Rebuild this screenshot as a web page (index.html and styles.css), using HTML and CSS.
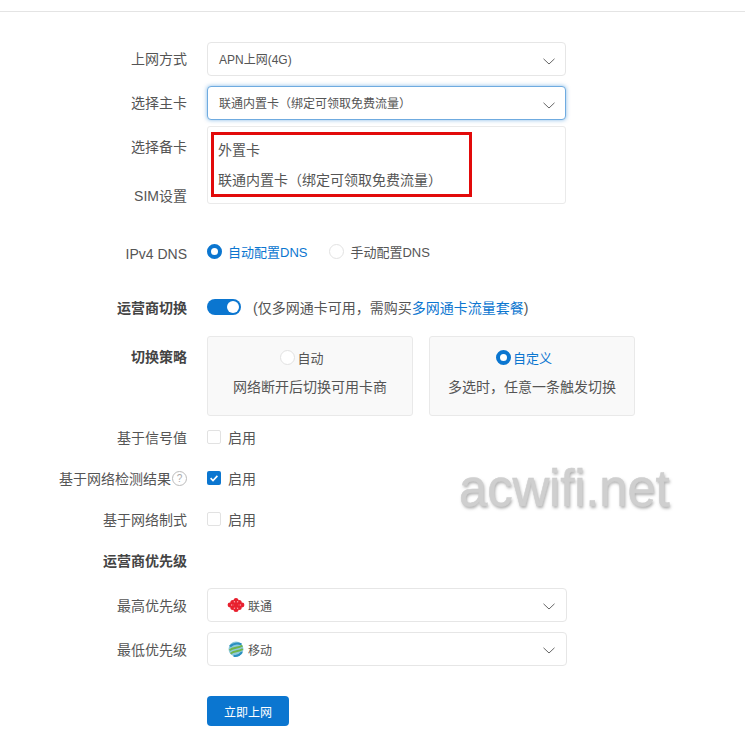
FILE: index.html
```html
<!DOCTYPE html>
<html>
<head>
<meta charset="utf-8">
<title>上网设置</title>
<link rel="stylesheet" href="styles.css">
</head>
<body>
<div class="topline"></div>
<div class="form">

	<div class="row row-select">
		<div class="label top">上网方式</div>
		<div class="select">
			<span>APN上网(4G)</span>
			<svg class="arrow" viewBox="0 0 12 7"><path d="M.5.8 6 6 11.5.8"/></svg>
		</div>
	</div>

	<div class="row row-select">
		<div class="label top">选择主卡</div>
		<div class="select focus">
			<span>联通内置卡（绑定可领取免费流量）</span>
			<svg class="arrow" viewBox="0 0 12 7"><path d="M.5.8 6 6 11.5.8"/></svg>
		</div>
		<div class="dropdown">
			<div class="option">外置卡</div>
			<div class="option">联通内置卡（绑定可领取免费流量）</div>
			<div class="redbox"></div>
		</div>
	</div>

	<div class="row row-backup">
		<div class="label top">选择备卡</div>
	</div>
	<div class="row row-sim">
		<div class="label top">SIM设置</div>
	</div>

	<div class="row row-dns">
		<div class="label low">IPv4 DNS</div>
		<div class="radios">
			<span class="radio on"></span><span class="radio-text blue">自动配置DNS</span>
			<span class="radio second"></span><span class="radio-text">手动配置DNS</span>
		</div>
	</div>

	<div class="row row-switch">
		<div class="label bold">运营商切换</div>
		<span class="switch"><i></i></span>
		<span class="note">(仅多网通卡可用，需购买<a class="link">多网通卡流量套餐</a>)</span>
	</div>

	<div class="row row-cards">
		<div class="label bold">切换策略</div>
		<div class="card">
			<div class="card-head"><span class="radio"></span><span>自动</span></div>
			<div class="card-text">网络断开后切换可用卡商</div>
		</div>
		<div class="card">
			<div class="card-head blue"><span class="radio on"></span><span>自定义</span></div>
			<div class="card-text">多选时，任意一条触发切换</div>
		</div>
	</div>

	<div class="row row-check">
		<div class="label">基于信号值</div>
		<span class="check"></span><span class="check-text">启用</span>
	</div>
	<div class="row row-check">
		<div class="label">基于网络检测结果<span class="help">?</span></div>
		<span class="check on"><svg viewBox="0 0 14 14"><path d="M3.6 7.2 6 9.5l4.4-4.6"/></svg></span><span class="check-text">启用</span>
	</div>
	<div class="row row-check">
		<div class="label">基于网络制式</div>
		<span class="check"></span><span class="check-text">启用</span>
	</div>
	<div class="row row-check last">
		<div class="label bold">运营商优先级</div>
	</div>

	<div class="row row-prio">
		<div class="label">最高优先级</div>
		<div class="select wide">
			<svg class="logo" viewBox="0 0 18 18">
				<g fill="#e8202e">
					<circle cx="9" cy="4.4" r="2.5"/><circle cx="9" cy="13.6" r="2.5"/>
					<circle cx="5.8" cy="6.6" r="2.5"/><circle cx="12.2" cy="6.6" r="2.5"/>
					<circle cx="5.8" cy="11.4" r="2.5"/><circle cx="12.2" cy="11.4" r="2.5"/>
					<circle cx="3" cy="9" r="2.4"/><circle cx="15" cy="9" r="2.4"/>
					<circle cx="9" cy="9" r="2.5"/>
				</g>
				<g fill="#f7a5ab">
					<circle cx="7.4" cy="5.8" r=".7"/><circle cx="10.6" cy="5.8" r=".7"/>
					<circle cx="7.4" cy="12.2" r=".7"/><circle cx="10.6" cy="12.2" r=".7"/>
					<circle cx="4.6" cy="9" r=".7"/><circle cx="13.4" cy="9" r=".7"/>
				</g>
			</svg>
			<span>联通</span>
			<svg class="arrow" viewBox="0 0 12 7"><path d="M.5.8 6 6 11.5.8"/></svg>
		</div>
	</div>
	<div class="row row-prio">
		<div class="label">最低优先级</div>
		<div class="select wide">
			<svg class="logo" viewBox="0 0 18 18">
				<circle cx="9" cy="9" r="7.5" fill="#8ec9dc"/>
				<path d="M3 6.4C6 3.4 11 3 14.4 4.2" fill="none" stroke="#2a8fc0" stroke-width="2.2"/>
				<path d="M2.6 10.4C6 6.6 10.6 8.8 15.4 5.6" fill="none" stroke="#6fb54a" stroke-width="1.9"/>
				<path d="M3.6 13.6C7.4 10 11 12.4 15.8 9" fill="none" stroke="#6fb54a" stroke-width="1.9"/>
				<path d="M6.6 15.8c3.2.8 6.2-.8 8.4-3.6" fill="none" stroke="#2a8fc0" stroke-width="2"/>
			</svg>
			<span>移动</span>
			<svg class="arrow" viewBox="0 0 12 7"><path d="M.5.8 6 6 11.5.8"/></svg>
		</div>
	</div>

	<div class="row row-btn">
		<button class="btn">立即上网</button>
	</div>
</div>
<div class="watermark">acwifi.net</div>
</body>
</html>
```

FILE: styles.css
```css
html, body {
	margin: 0;
	padding: 0;
	background: #fff;
}

body {
	position: relative;
	height: 735px;
	overflow: hidden;
	font-family: "Liberation Sans", "Noto Sans CJK SC", sans-serif;
	font-size: 14px;
	color: #555;
}

.topline {
	height: 11px;
	border-bottom: 1px solid #e4e4e4;
}

.form {
	padding-top: 30px;
}

.row {
	position: relative;
	display: flex;
	align-items: center;
}

.label {
	width: 187px;
	margin-right: 20px;
	flex-shrink: 0;
	display: flex;
	justify-content: flex-end;
	align-items: center;
}

.label.top {
	padding-bottom: 2px;
}

.label.low {
	padding-top: 2px;
}

.bold {
	font-weight: bold;
	color: #444;
}

.blue {
	color: #0b76d0;
}

/* selects */
.row-select {
	height: 34px;
	margin-bottom: 10px;
}

.select {
	box-sizing: border-box;
	width: 359px;
	height: 34px;
	padding: 0 11px 2px;
	display: flex;
	align-items: center;
	font-size: 12px;
	color: #555;
	border: 1px solid #e6e6e6;
	border-radius: 4px;
	background: #fff;
}

.select.focus {
	border-color: #6fabe0;
	box-shadow: 0 0 4px rgba(11, 118, 208, .5);
}

.select.wide {
	width: 360px;
	padding-left: 19px;
	padding-bottom: 0;
}

.arrow {
	width: 12px;
	height: 7px;
	margin: 6px -1px 0 auto;
	fill: none;
	stroke: #666;
	stroke-width: 1;
}

.select.wide .arrow {
	margin: 3px 0 0 auto;
}

.logo {
	width: 18px;
	height: 18px;
	margin-right: 3px;
}

.dropdown {
	position: absolute;
	left: 207px;
	top: 40px;
	box-sizing: border-box;
	width: 359px;
	height: 78px;
	padding-top: 8px;
	border: 1px solid #eaeaea;
	border-radius: 3px;
	background: #fff;
	z-index: 2;
}

.option {
	height: 30px;
	line-height: 30px;
	padding-left: 10px;
}

.redbox {
	position: absolute;
	left: 3px;
	top: 5px;
	width: 255px;
	height: 59px;
	border: 3px solid #e20a0a;
}

/* plain label rows */
.row-backup {
	height: 34px;
	margin-bottom: 15px;
}

.row-sim {
	height: 34px;
	margin-bottom: 23px;
}

.row-dns {
	height: 34px;
	margin-bottom: 20px;
}

.radios {
	display: flex;
	align-items: center;
	font-size: 13px;
	margin-top: -4px;
}

.radio {
	box-sizing: border-box;
	display: inline-block;
	width: 15px;
	height: 15px;
	border: 1px solid #e2e2e2;
	border-radius: 50%;
	background: #fff;
}

.radio.on {
	border: 4px solid #0b76d0;
}

.radio.second {
	margin-left: 22px;
}

.radio-text {
	margin-left: 6px;
}

/* switch row */
.row-switch {
	height: 34px;
	margin-bottom: 12px;
}

.switch {
	box-sizing: border-box;
	width: 34px;
	height: 16px;
	padding: 2px;
	display: flex;
	justify-content: flex-end;
	border-radius: 8px;
	background: #0b76d0;
}

.switch i {
	width: 12px;
	height: 12px;
	border-radius: 50%;
	background: #fff;
}

.note {
	margin-left: 12px;
}

.link {
	color: #0b76d0;
}

/* strategy cards */
.row-cards {
	align-items: flex-start;
	margin-bottom: 4px;
}

.row-cards .label {
	height: 40px;
}

.card {
	box-sizing: border-box;
	width: 206px;
	height: 80px;
	margin-right: 16px;
	padding-top: 12px;
	text-align: center;
	background: #f9f9f9;
	border: 1px solid #e9e9e9;
	border-radius: 3px;
}

.card-head {
	display: flex;
	justify-content: center;
	align-items: center;
	height: 16px;
	padding-right: 16px;
	font-size: 13px;
}

.card-head .radio {
	margin-right: 2px;
}

.card-text {
	margin-top: 12px;
	line-height: 20px;
}

/* checkbox rows */
.row-check {
	height: 34px;
	margin-bottom: 7px;
}

.row-check.last {
	margin-bottom: 11px;
}

.check {
	box-sizing: border-box;
	width: 14px;
	height: 14px;
	border: 1px solid #e2e2e2;
	border-radius: 2px;
	background: #fff;
}

.check.on {
	border: 0;
	background: #0b76d0;
}

.check svg {
	display: block;
	fill: none;
	stroke: #fff;
	stroke-width: 1.6;
}

.check-text {
	margin-left: 7px;
}

.help {
	box-sizing: border-box;
	width: 15px;
	height: 15px;
	margin-left: 1px;
	border: 1px solid #bbb;
	border-radius: 50%;
	font-size: 10px;
	line-height: 13px;
	text-align: center;
	color: #aaa;
}

.row-prio {
	height: 34px;
	margin-bottom: 10px;
}

.row-btn {
	padding: 20px 0 0 207px;
}

.btn {
	width: 82px;
	height: 30px;
	border: 0;
	border-radius: 4px;
	background: #0b76d0;
	color: #fff;
	font-family: inherit;
	font-size: 12px;
}

.watermark {
	position: absolute;
	left: 459px;
	top: 461px;
	font-size: 51px;
	line-height: 56px;
	letter-spacing: -.2px;
	color: #cfcfcf;
	-webkit-text-stroke: .5px #cfcfcf;
	text-shadow: 1px 2px 3px rgba(90, 90, 90, .5);
	filter: blur(.5px);
}
```
